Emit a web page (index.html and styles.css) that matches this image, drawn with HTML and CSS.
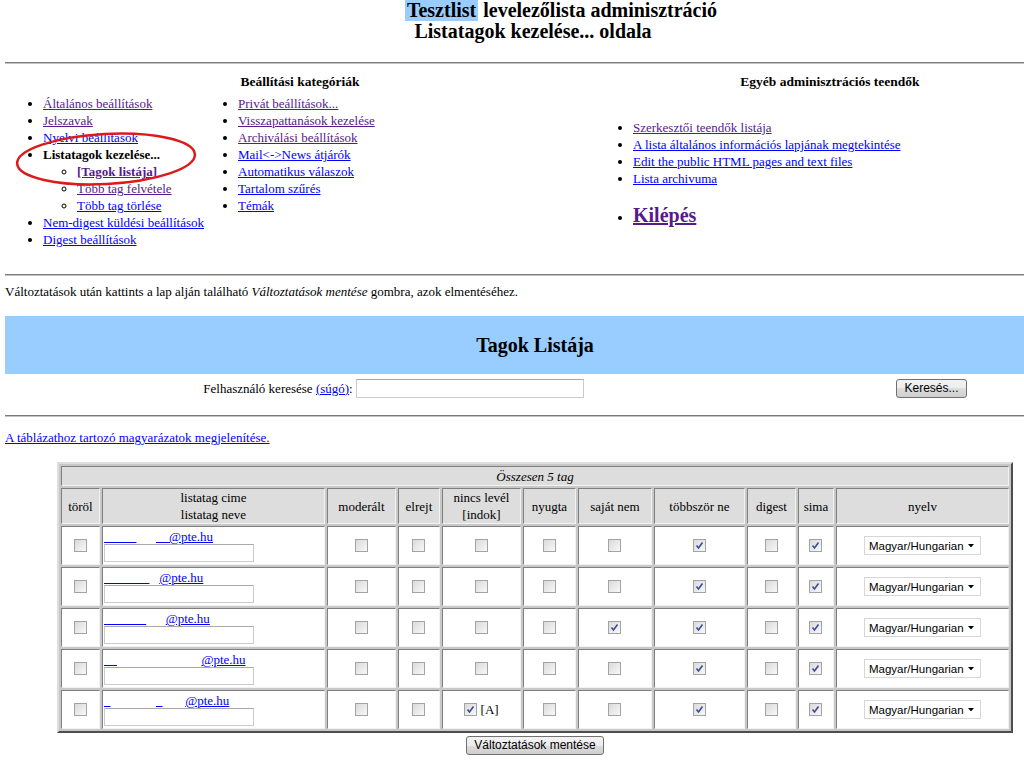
FILE: index.html
```html
<!DOCTYPE html>
<html lang="hu">
<head>
<meta charset="utf-8">
<title>Tesztlist Listatagok kezelése</title>
<link rel="stylesheet" href="styles.css">
</head>
<body>
<div class="page">
  <h1 class="title">
    <span class="l1"><span class="hl">Tesztlist</span> levelezőlista adminisztráció</span>
    <span class="l2">Listatagok kezelése... oldala</span>
  </h1>
  <hr class="rule rule-top">

  <div class="nav">
    <div class="nav-left">
      <div class="nav-head">Beállítási kategóriák</div>
      <div class="nav-cols">
        <ul class="nav-list">
          <li><a class="v" href="#">Általános beállítások</a></li>
          <li><a class="v" href="#">Jelszavak</a></li>
          <li><a href="#">Nyelvi beállítások</a></li>
          <li><strong>Listatagok kezelése...</strong>
            <ul class="sub">
              <li><a class="v" href="#"><strong>[Tagok listája]</strong></a></li>
              <li><a class="v" href="#">Több tag felvétele</a></li>
              <li><a href="#">Több tag törlése</a></li>
            </ul>
          </li>
          <li><a href="#">Nem-digest küldési beállítások</a></li>
          <li><a href="#">Digest beállítások</a></li>
        </ul>
        <ul class="nav-list">
          <li><a class="v" href="#">Privát beállítások...</a></li>
          <li><a class="v" href="#">Visszapattanások kezelése</a></li>
          <li><a class="v" href="#">Archiválási beállítások</a></li>
          <li><a href="#">Mail&lt;-&gt;News átjárók</a></li>
          <li><a href="#">Automatikus válaszok</a></li>
          <li><a href="#">Tartalom szűrés</a></li>
          <li><a href="#">Témák</a></li>
        </ul>
      </div>
    </div>
    <div class="nav-right">
      <div class="nav-head">Egyéb adminisztrációs teendők</div>
      <ul class="nav-list other">
        <li><a class="v" href="#">Szerkesztői teendők listája</a></li>
        <li><a href="#">A lista általános információs lapjának megtekintése</a></li>
        <li><a href="#">Edit the public HTML pages and text files</a></li>
        <li><a href="#">Lista archivuma</a></li>
      </ul>
      <ul class="nav-list logout">
        <li><a class="v" href="#">Kilépés</a></li>
      </ul>
    </div>
  </div>

  <hr class="rule rule-mid">

  <p class="note">Változtatások után kattints a lap alján található <em>Változtatások mentése</em> gombra, azok elmentéséhez.</p>

  <div class="banner"><h2>Tagok Listája</h2></div>

  <div class="search">
    <div class="search-field">
      <span>Felhasználó keresése <a href="#">(súgó)</a>:</span>
      <input class="textbox search-box" type="text">
    </div>
    <div class="search-btn">
      <button class="btn" type="button">Keresés...</button>
    </div>
  </div>

  <hr class="rule rule-low">

  <p class="legend"><a href="#">A táblázathoz tartozó magyarázatok megjelenítése.</a></p>

  <table class="members">
    <colgroup>
      <col class="c-del"><col class="c-addr"><col class="c-mod"><col class="c-hide"><col class="c-nomail"><col class="c-ack"><col class="c-own"><col class="c-dup"><col class="c-dig"><col class="c-plain"><col class="c-lang">
    </colgroup>
    <tr>
      <td class="total" colspan="11"><em>Összesen 5 tag</em></td>
    </tr>
    <tr class="head">
      <th>töröl</th>
      <th>listatag cime<br>listatag neve</th>
      <th>moderált</th>
      <th>elrejt</th>
      <th>nincs levél<br>[indok]</th>
      <th>nyugta</th>
      <th>saját nem</th>
      <th>többször ne</th>
      <th>digest</th>
      <th>sima</th>
      <th>nyelv</th>
    </tr>
    <tr>
      <td><span class="cb"></span></td>
      <td class="addr"><a href="#">&nbsp;&nbsp;&nbsp;&nbsp;&nbsp;&nbsp;&nbsp;&nbsp;&nbsp;&nbsp;<span class="gap">&nbsp;&nbsp;&nbsp;&nbsp;&nbsp;&nbsp;</span>&nbsp;&nbsp;&nbsp;&nbsp;@pte.hu</a><input class="textbox name" type="text"></td>
      <td><span class="cb"></span></td>
      <td><span class="cb"></span></td>
      <td><span class="cb"></span></td>
      <td><span class="cb"></span></td>
      <td><span class="cb"></span></td>
      <td><span class="cb on"><svg viewBox="0 0 13 13"><path d="M3.5 6.5 L5.5 9 L9.5 3.5"/></svg></span></td>
      <td><span class="cb"></span></td>
      <td><span class="cb on"><svg viewBox="0 0 13 13"><path d="M3.5 6.5 L5.5 9 L9.5 3.5"/></svg></span></td>
      <td><span class="select">Magyar/Hungarian<svg viewBox="0 0 7 4"><path d="M0 0 H7 L3.5 4 Z"/></svg></span></td>
    </tr>
    <tr>
      <td><span class="cb"></span></td>
      <td class="addr"><a href="#">&nbsp;&nbsp;&nbsp;&nbsp;&nbsp;&nbsp;&nbsp;&nbsp;&nbsp;&nbsp;&nbsp;&nbsp;&nbsp;&nbsp;<span class="gap">&nbsp;&nbsp;&nbsp;</span>@pte.hu</a><input class="textbox name" type="text"></td>
      <td><span class="cb"></span></td>
      <td><span class="cb"></span></td>
      <td><span class="cb"></span></td>
      <td><span class="cb"></span></td>
      <td><span class="cb"></span></td>
      <td><span class="cb on"><svg viewBox="0 0 13 13"><path d="M3.5 6.5 L5.5 9 L9.5 3.5"/></svg></span></td>
      <td><span class="cb"></span></td>
      <td><span class="cb on"><svg viewBox="0 0 13 13"><path d="M3.5 6.5 L5.5 9 L9.5 3.5"/></svg></span></td>
      <td><span class="select">Magyar/Hungarian<svg viewBox="0 0 7 4"><path d="M0 0 H7 L3.5 4 Z"/></svg></span></td>
    </tr>
    <tr>
      <td><span class="cb"></span></td>
      <td class="addr"><a href="#">&nbsp;&nbsp;&nbsp;&nbsp;&nbsp;&nbsp;&nbsp;&nbsp;&nbsp;&nbsp;&nbsp;&nbsp;&nbsp;<span class="gap">&nbsp;&nbsp;&nbsp;&nbsp;&nbsp;&nbsp;</span>@pte.hu</a><input class="textbox name" type="text"></td>
      <td><span class="cb"></span></td>
      <td><span class="cb"></span></td>
      <td><span class="cb"></span></td>
      <td><span class="cb"></span></td>
      <td><span class="cb on"><svg viewBox="0 0 13 13"><path d="M3.5 6.5 L5.5 9 L9.5 3.5"/></svg></span></td>
      <td><span class="cb on"><svg viewBox="0 0 13 13"><path d="M3.5 6.5 L5.5 9 L9.5 3.5"/></svg></span></td>
      <td><span class="cb"></span></td>
      <td><span class="cb on"><svg viewBox="0 0 13 13"><path d="M3.5 6.5 L5.5 9 L9.5 3.5"/></svg></span></td>
      <td><span class="select">Magyar/Hungarian<svg viewBox="0 0 7 4"><path d="M0 0 H7 L3.5 4 Z"/></svg></span></td>
    </tr>
    <tr>
      <td><span class="cb"></span></td>
      <td class="addr"><a href="#">&nbsp;&nbsp;&nbsp;&nbsp;<span class="gap">&nbsp;&nbsp;&nbsp;&nbsp;&nbsp;&nbsp;&nbsp;&nbsp;&nbsp;&nbsp;&nbsp;&nbsp;&nbsp;&nbsp;&nbsp;&nbsp;&nbsp;&nbsp;&nbsp;&nbsp;&nbsp;&nbsp;&nbsp;&nbsp;&nbsp;&nbsp;</span>@pte.hu</a><input class="textbox name" type="text"></td>
      <td><span class="cb"></span></td>
      <td><span class="cb"></span></td>
      <td><span class="cb"></span></td>
      <td><span class="cb"></span></td>
      <td><span class="cb"></span></td>
      <td><span class="cb on"><svg viewBox="0 0 13 13"><path d="M3.5 6.5 L5.5 9 L9.5 3.5"/></svg></span></td>
      <td><span class="cb"></span></td>
      <td><span class="cb on"><svg viewBox="0 0 13 13"><path d="M3.5 6.5 L5.5 9 L9.5 3.5"/></svg></span></td>
      <td><span class="select">Magyar/Hungarian<svg viewBox="0 0 7 4"><path d="M0 0 H7 L3.5 4 Z"/></svg></span></td>
    </tr>
    <tr>
      <td><span class="cb"></span></td>
      <td class="addr"><a href="#">&nbsp;&nbsp;<span class="gap">&nbsp;&nbsp;&nbsp;&nbsp;&nbsp;&nbsp;&nbsp;&nbsp;&nbsp;&nbsp;&nbsp;&nbsp;&nbsp;&nbsp;</span>&nbsp;&nbsp;<span class="gap">&nbsp;&nbsp;&nbsp;&nbsp;&nbsp;&nbsp;&nbsp;</span>@pte.hu</a><input class="textbox name" type="text"></td>
      <td><span class="cb"></span></td>
      <td><span class="cb"></span></td>
      <td><span class="cb on"><svg viewBox="0 0 13 13"><path d="M3.5 6.5 L5.5 9 L9.5 3.5"/></svg></span> [A]</td>
      <td><span class="cb"></span></td>
      <td><span class="cb"></span></td>
      <td><span class="cb on"><svg viewBox="0 0 13 13"><path d="M3.5 6.5 L5.5 9 L9.5 3.5"/></svg></span></td>
      <td><span class="cb"></span></td>
      <td><span class="cb on"><svg viewBox="0 0 13 13"><path d="M3.5 6.5 L5.5 9 L9.5 3.5"/></svg></span></td>
      <td><span class="select">Magyar/Hungarian<svg viewBox="0 0 7 4"><path d="M0 0 H7 L3.5 4 Z"/></svg></span></td>
    </tr>
  </table>

  <div class="submit-row">
    <button class="btn" type="button">Változtatások mentése</button>
  </div>

  <svg class="annot" width="230" height="210" viewBox="0 0 230 210">
    <ellipse cx="106" cy="159" rx="89" ry="25" transform="rotate(-3 106 159)"/>
  </svg>
</div>
</body>
</html>
```

FILE: styles.css
```css
html, body {
  margin: 0;
  padding: 0;
  overflow: hidden;
  background: #fff;
}

body {
  font-family: "Liberation Serif", "Times New Roman", serif;
  font-size: 13px;
  line-height: 15px;
  color: #000;
}

.page {
  position: relative;
  width: 1060px;
  padding: 0 5px;
}

a {
  color: #0000ff;
  text-decoration: underline;
}

a.v {
  color: #551a8b;
}

/* Title */
.title {
  margin: 0;
  font-size: 20px;
  line-height: 21px;
  font-weight: bold;
  display: flex;
  flex-direction: column;
  align-items: center;
}

.title .l1 {
  padding-left: 52px;
}

.title .l2 {
  padding-right: 4px;
}

.hl {
  background: #99ccff;
  padding: 0 2px;
}

/* Rules */
.rule {
  height: 0;
  border: 0;
  border-top: 1px solid #7b7b7b;
  border-bottom: 1px solid #c4c4c4;
  margin: 0;
}

.rule-top { margin-top: 20px; }
.rule-mid { margin-top: 26px; }
.rule-low { margin-top: 17px; }

/* Navigation */
.nav {
  display: grid;
  grid-template-columns: 590px 470px;
  padding-top: 10px;
}

.nav-head {
  text-align: center;
  font-weight: bold;
  font-size: 13.5px;
  line-height: 15px;
}

.nav-cols {
  display: grid;
  grid-template-columns: 195px auto;
  margin-top: 6px;
}

.nav-list {
  margin: 0;
  padding-left: 38px;
  list-style: disc;
  line-height: 17px;
  white-space: nowrap;
}

.nav-list .sub {
  margin: 0;
  padding-left: 34px;
  list-style: circle;
}

.nav-list.other {
  margin-top: 30px;
}

.nav-list.logout {
  margin-top: 17px;
  font-size: 20px;
  font-weight: bold;
  line-height: 23px;
}

.nav-list.logout li::marker {
  font-size: 14px;
}

/* Note */
.note {
  margin: 8px 0 0;
}

/* Banner */
.banner {
  margin-top: 17px;
  height: 58px;
  background: #99ccff;
  display: flex;
  align-items: center;
  justify-content: center;
}

.banner h2 {
  margin: 0;
  font-size: 20px;
  line-height: 23px;
  font-weight: bold;
}

/* Search */
.search {
  display: grid;
  grid-template-columns: 777px 1fr;
  padding-top: 5px;
  align-items: center;
}

.search-field {
  display: flex;
  justify-content: center;
  align-items: center;
  gap: 3px;
}

.search-btn {
  display: flex;
  justify-content: center;
  padding-left: 16px;
}

.textbox {
  box-sizing: border-box;
  border: 1px solid #cbcbcb;
  border-top-color: #a9a9a9;
  background: #fff;
  padding: 0;
  margin: 0;
  font: 12px "Liberation Sans", Arial, sans-serif;
}

.search-box {
  width: 228px;
  height: 19px;
}

.btn {
  box-sizing: border-box;
  height: 19px;
  padding: 0 7px;
  border: 1px solid #707070;
  border-radius: 3px;
  background: linear-gradient(#f3f3f3, #ececec 50%, #dddddd 50%, #cfcfcf);
  font: 12px/15px "Liberation Sans", Arial, sans-serif;
  color: #000;
}

/* Legend link */
.legend {
  margin: 13px 0 0;
}

/* Members table */
.members {
  margin: 17px auto 0;
  width: 956px;
  table-layout: fixed;
  border-collapse: separate;
  border-spacing: 2px;
  border: 2px solid;
  border-color: #dedede #4d4d4d #4d4d4d #dedede;
  background: #c8c8c8;
}

.c-del { width: 39px; }
.c-addr { width: 223px; }
.c-mod { width: 69px; }
.c-hide { width: 42px; }
.c-nomail { width: 79px; }
.c-ack { width: 53px; }
.c-own { width: 74px; }
.c-dup { width: 91px; }
.c-dig { width: 49px; }
.c-plain { width: 36px; }
.c-lang { width: 173px; }

.members td,
.members th {
  border: 1px solid;
  border-color: #7f7f7f #f2f2f2 #f2f2f2 #7f7f7f;
  padding: 2px 1px;
  text-align: center;
  vertical-align: middle;
  background: #fff;
  font-weight: normal;
  white-space: nowrap;
}

.members td.total {
  background: #dddddd;
  padding: 2px 1px 1px;
}

.members .head th {
  background: #dddddd;
  line-height: 17px;
  padding: 0 1px;
}

.members td.addr {
  text-align: left;
  padding-left: 1px;
}

.addr a {
  display: block;
  width: max-content;
}

.addr .gap {
  display: inline-block;
}

.name {
  display: block;
  width: 150px;
  height: 18px;
}

.cb {
  display: inline-block;
  box-sizing: border-box;
  width: 13px;
  height: 13px;
  border: 1px solid #a3a3a3;
  background: linear-gradient(135deg, #dadada, #f8f8f8);
  vertical-align: -2px;
}

.cb svg {
  display: block;
  fill: none;
  stroke: #3c4c9c;
  stroke-width: 1.6;
  margin: 0;
}

.cb.on svg {
  transform: translate(-1px, -1px);
  width: 13px;
  height: 13px;
}

.select {
  display: inline-flex;
  box-sizing: border-box;
  width: 117px;
  height: 19px;
  align-items: center;
  justify-content: space-between;
  padding: 0 6px 0 4px;
  border: 1px solid #d6d6d6;
  background: #fff;
  font: 11.5px "Liberation Sans", Arial, sans-serif;
  vertical-align: middle;
}

.select svg {
  width: 6px;
  height: 3.5px;
  fill: #000;
}

/* Submit */
.submit-row {
  display: flex;
  justify-content: center;
  margin-top: 3px;
}

/* Annotation ellipse drawn over the menu */
.annot {
  position: absolute;
  left: 0;
  top: 0;
  pointer-events: none;
  fill: none;
  stroke: #dd1a1a;
  stroke-width: 2.5;
}
```
